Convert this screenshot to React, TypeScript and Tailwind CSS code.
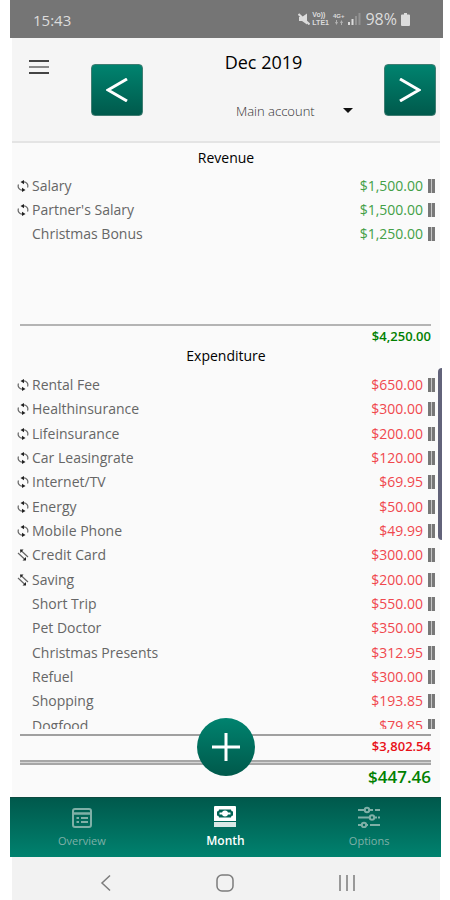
import { useState, type ReactNode } from "react";

type Repeat = "monthly" | "partial" | null;

type Entry = {
  name: string;
  amount: string;
  repeat: Repeat;
};

const revenue: Entry[] = [
  { name: "Salary", amount: "$1,500.00", repeat: "monthly" },
  { name: "Partner's Salary", amount: "$1,500.00", repeat: "monthly" },
  { name: "Christmas Bonus", amount: "$1,250.00", repeat: null },
];

const expenditure: Entry[] = [
  { name: "Rental Fee", amount: "$650.00", repeat: "monthly" },
  { name: "Healthinsurance", amount: "$300.00", repeat: "monthly" },
  { name: "Lifeinsurance", amount: "$200.00", repeat: "monthly" },
  { name: "Car Leasingrate", amount: "$120.00", repeat: "monthly" },
  { name: "Internet/TV", amount: "$69.95", repeat: "monthly" },
  { name: "Energy", amount: "$50.00", repeat: "monthly" },
  { name: "Mobile Phone", amount: "$49.99", repeat: "monthly" },
  { name: "Credit Card", amount: "$300.00", repeat: "partial" },
  { name: "Saving", amount: "$200.00", repeat: "partial" },
  { name: "Short Trip", amount: "$550.00", repeat: null },
  { name: "Pet Doctor", amount: "$350.00", repeat: null },
  { name: "Christmas Presents", amount: "$312.95", repeat: null },
  { name: "Refuel", amount: "$300.00", repeat: null },
  { name: "Shopping", amount: "$193.85", repeat: null },
  { name: "Dogfood", amount: "$79.85", repeat: null },
];

export default function App() {
  const [tab, setTab] = useState("Month");

  return (
    <div className="flex min-h-screen flex-col bg-white pl-[10px] pr-[7px] font-['Open_Sans','Noto_Sans',sans-serif]">
      <StatusBar />

      <main className="relative ml-0.5 mr-[3px] flex flex-1 flex-col bg-[#fafafa]">
        <Header />

        {/* Revenue */}
        <section aria-labelledby="revenue-heading">
          <h2 id="revenue-heading" className="pt-[3px] text-center text-sm font-medium leading-6 text-black">
            Revenue
          </h2>
          <div className="mt-1 h-[150px] overflow-hidden">
            <ul>
              {revenue.map((entry) => (
                <EntryRow key={entry.name} entry={entry} amountClass="text-[#43a047]" />
              ))}
            </ul>
          </div>
          <div className="ml-2 mr-[9px] border-t-2 border-[#b4b4b4] text-right text-[13px] font-semibold leading-5 text-[#008000]">
            $4,250.00
          </div>
        </section>

        {/* Expenditure */}
        <section aria-labelledby="expenditure-heading" className="relative">
          <h2 id="expenditure-heading" className="text-center text-sm font-medium leading-5 text-black">
            Expenditure
          </h2>
          <div className="mt-[7px] h-[356px] overflow-hidden">
            <ul className="grid h-[365px] auto-rows-fr">
              {expenditure.map((entry) => (
                <EntryRow key={entry.name} entry={entry} amountClass="text-[#f0484e]" />
              ))}
            </ul>
          </div>
          <div className="ml-2 mr-[9px] mt-[5px] border-t-2 border-[#a0a0a0] text-right text-[13px] font-semibold leading-5 text-[#e81018]">
            $3,802.54
          </div>
          <div className="absolute -right-0.5 top-[22px] h-[172px] w-1 rounded-l bg-[#62637a]" aria-hidden="true" />
        </section>

        {/* Balance */}
        <div className="relative ml-2 mr-[9px] mt-1 pb-1">
          <div className="h-[5px] border-y-2 border-[#a6a6a6] bg-[#d4d4d4]" />
          <p className="text-right text-[17px] font-semibold leading-6 text-[#008000]">$447.46</p>
          <button
            type="button"
            aria-label="Add entry"
            className="absolute -top-[42px] left-1/2 flex size-[58px] -translate-x-1/2 items-center justify-center rounded-full bg-linear-to-b from-[#00836f] to-[#00594b]"
          >
            <svg viewBox="0 0 28 28" className="size-7" stroke="#fff" strokeWidth="3" aria-hidden="true">
              <path d="M14 0v28M0 14h28" />
            </svg>
          </button>
        </div>
      </main>

      <nav className="mr-0.5 grid h-[60px] grid-cols-3 border-t border-[#0c4a40] bg-linear-to-b from-[#00594c] to-[#00826f]">
        <TabButton label="Overview" active={tab === "Overview"} onClick={() => setTab("Overview")}>
          <OverviewIcon />
        </TabButton>
        <TabButton label="Month" active={tab === "Month"} onClick={() => setTab("Month")}>
          <MoneyIcon />
        </TabButton>
        <TabButton label="Options" active={tab === "Options"} onClick={() => setTab("Options")}>
          <SlidersIcon />
        </TabButton>
      </nav>

      <SystemNav />
    </div>
  );
}

function StatusBar() {
  return (
    <div className="flex h-[38px] items-center justify-between bg-[#757575] pl-[23px] pr-[33px] text-[#dcdcdc]">
      <span className="pt-0.5 text-[15px] font-medium">15:43</span>
      <div className="flex items-center">
        {/* Muted speaker */}
        <svg viewBox="0 0 12 12" className="size-3" aria-hidden="true">
          <path d="M1 4h3l5-3.500v11L4 8H1z" fill="currentColor" />
          <path d="M.5 1l11 10.500" stroke="currentColor" strokeWidth="2" />
        </svg>
        <span className="ml-0.5 flex flex-col font-['Liberation_Sans',sans-serif] text-[7px] font-bold leading-[8px]">
          <span>Vo))</span>
          <span>LTE1</span>
        </span>
        <span className="ml-1 flex flex-col items-center font-['Liberation_Sans',sans-serif] text-[6px] font-bold leading-[7px]">
          <span>4G+</span>
          <svg viewBox="0 0 8 5" className="h-[5px] w-2" fill="currentColor" opacity=".6" aria-hidden="true">
            <path d="M1 0h1v2h1L1.500 5 0 2h1zM6 5h1V3h1L6.500 0 5 3h1z" />
          </svg>
        </span>
        <svg viewBox="0 0 13 12" className="ml-1 h-3 w-[13px]" fill="currentColor" aria-hidden="true">
          <path d="M0 9h2v3H0zM3.500 6h2v6h-2z" />
          <path d="M7 3h2v9H7zM10.500 0h2v12h-2z" opacity=".3" />
        </svg>
        <span className="ml-1 text-base leading-6">98%</span>
        <svg viewBox="0 0 9 13" className="ml-1 h-[13px] w-[9px]" fill="currentColor" aria-hidden="true">
          <path d="M3 0h3v1.500h2a1 1 0 0 1 1 1V12a1 1 0 0 1-1 1H1a1 1 0 0 1-1-1V2.500a1 1 0 0 1 1-1h2z" />
        </svg>
      </div>
    </div>
  );
}

function Header() {
  return (
    <header className="flex h-[105px] items-start border-b-2 border-[#e4e4e4] bg-[#f5f5f5] pr-1">
      <button type="button" aria-label="Menu" className="ml-[17px] mt-[21px]">
        <svg viewBox="0 0 20 16" className="h-4 w-5" strokeWidth="2" aria-hidden="true">
          <path d="M0 2h20M0 14h20" stroke="#444" />
          <path d="M0 8h20" stroke="#8a8a8a" />
        </svg>
      </button>
      <MonthButton label="Previous month" className="ml-[42px]">
        <path d="M21 1L2 12l19 11" />
      </MonthButton>
      <div className="flex flex-1 flex-col items-center pt-3">
        <h1 className="text-lg font-medium leading-6 text-black">Dec 2019</h1>
        <div className="relative mt-6 self-end pr-[30px]">
          <select
            aria-label="Account"
            defaultValue="main"
            className="w-[120px] appearance-none bg-transparent pl-0.5 text-[13px] font-light leading-5 text-[#333]"
          >
            <option value="main">Main account</option>
          </select>
          <svg
            viewBox="0 0 10 5"
            className="pointer-events-none absolute right-[31px] top-[10px] h-[5px] w-[10px]"
            aria-hidden="true"
          >
            <path d="M0 0h10L5 5z" fill="#111" />
          </svg>
        </div>
      </div>
      <MonthButton label="Next month" className="">
        <path d="M1 1l19 11L1 23" />
      </MonthButton>
    </header>
  );
}

function MonthButton({
  label,
  className,
  children,
}: {
  label: string;
  className: string;
  children: ReactNode;
}) {
  return (
    <button
      type="button"
      aria-label={label}
      className={`mt-[26px] flex size-[52px] items-center justify-center rounded border border-[#3f7d72] bg-linear-to-b from-[#00836f] to-[#005a4c] ${className}`}
    >
      <svg viewBox="0 0 22 24" className="h-6 w-[22px]" fill="none" stroke="#fff" strokeWidth="3" aria-hidden="true">
        {children}
      </svg>
    </button>
  );
}

function EntryRow({ entry, amountClass }: { entry: Entry; amountClass: string }) {
  return (
    <li className="flex items-center pl-[5px] pr-1 text-sm leading-6">
      <span className="w-[15px]">
        <RepeatIcon repeat={entry.repeat} />
      </span>
      <span className="flex-1 text-[#666]">{entry.name}</span>
      <span className={amountClass}>{entry.amount}</span>
      <svg viewBox="0 0 9 14" className="ml-1 h-3.5 w-[9px]" aria-hidden="true">
        <path d="M1 0h7v14H1z" fill="#c4c4c4" />
        <path d="M1 0h3v14H1zM5 0h3v14H5z" fill="#777" />
      </svg>
    </li>
  );
}

function RepeatIcon({ repeat }: { repeat: Repeat }) {
  if (!repeat) return null;
  return (
    <svg viewBox="0 0 12 12" className="size-3" fill="none" stroke="#666" aria-hidden="true">
      {repeat === "monthly" ? (
        <>
          <path d="M6 2A4 4 0 0 1 10.500 7.500M6 10A4 4 0 0 1 1.500 4.500" strokeWidth="1.200" />
          <path d="M7 0L3.500 2 7 4.200zM5 7.800L8.500 10 5 12z" fill="#222" stroke="none" />
        </>
      ) : (
        <>
          <path d="M4 1.500l7 6.500M1 4l7 6.500" strokeWidth="1.200" />
          <path d="M3 .5h3.500L3.500 4zM9 8v3.500H5.500z" fill="#222" stroke="none" />
        </>
      )}
    </svg>
  );
}

function TabButton({
  label,
  active,
  onClick,
  children,
}: {
  label: string;
  active: boolean;
  onClick: () => void;
  children: ReactNode;
}) {
  return (
    <button
      type="button"
      onClick={onClick}
      aria-current={active ? "page" : undefined}
      className={`flex flex-col items-center pt-2 ${
        active ? "text-xs font-semibold text-white" : "text-[11px] font-normal text-[#7fb0a7]"
      }`}
    >
      {children}
      <span className="mt-[5px] leading-4">{label}</span>
    </button>
  );
}

function OverviewIcon() {
  return (
    <svg viewBox="0 0 22 22" className="size-[22px]" fill="none" stroke="currentColor" strokeWidth="2" aria-hidden="true">
      <rect x="2" y="3" width="18" height="18" rx="2" />
      <path d="M2 7.500h18" strokeWidth="2.500" />
      <path d="M5.500 12H8M10 12h7M5.500 16H8M10 16h7" />
    </svg>
  );
}

function MoneyIcon() {
  return (
    <svg viewBox="0 0 22 22" className="size-[22px]" fill="currentColor" aria-hidden="true">
      <path
        fillRule="evenodd"
        d="M1 0h20a1 1 0 0 1 1 1v14H0V1a1 1 0 0 1 1-1zM5 3.500a2 2 0 0 1-2 2v4a2 2 0 0 1 2 2h12a2 2 0 0 1 2-2v-4a2 2 0 0 1-2-2z"
      />
      <circle cx="11" cy="7.500" r="3" />
      <path d="M5.500 6.500h11v2h-11z" />
      <path d="M0 16h22v5H0z" opacity=".85" />
    </svg>
  );
}

function SlidersIcon() {
  return (
    <svg viewBox="0 0 22 22" className="size-[22px]" fill="none" stroke="currentColor" strokeWidth="2" aria-hidden="true">
      <path d="M0 4h6M12 4h3M17 4h5M0 11.500h11M17 11.500h2M20 11.500h2M0 19h3M9 19h1M12 19h10" />
      <circle cx="9" cy="4" r="2.200" />
      <circle cx="14" cy="11.500" r="2.200" />
      <circle cx="6" cy="19" r="2.200" />
    </svg>
  );
}

function SystemNav() {
  return (
    <div className="ml-0.5 mr-[3px] flex h-[43px] items-center justify-between bg-[#f2f2f2] pl-[88px] pr-[84px] pt-2 text-[#7c7c7c]">
      <button type="button" aria-label="Back">
        <svg viewBox="0 0 12 18" className="h-[18px] w-3" fill="none" stroke="currentColor" strokeWidth="1.500" aria-hidden="true">
          <path d="M10 1.500L2 9l8 7.500" />
        </svg>
      </button>
      <button type="button" aria-label="Home">
        <svg viewBox="0 0 18 18" className="size-[18px]" fill="none" stroke="currentColor" strokeWidth="1.500" aria-hidden="true">
          <rect x="1" y="1" width="16" height="16" rx="5" />
        </svg>
      </button>
      <button type="button" aria-label="Recent apps">
        <svg viewBox="0 0 18 16" className="h-4 w-[18px]" stroke="currentColor" strokeWidth="1.500" aria-hidden="true">
          <path d="M2 0v16M9 0v16M16 0v16" />
        </svg>
      </button>
    </div>
  );
}
